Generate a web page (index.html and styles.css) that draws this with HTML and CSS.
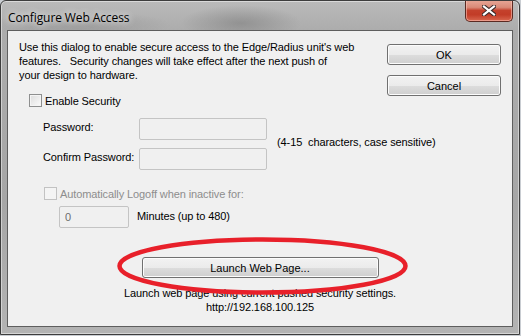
FILE: index.html
```html
<!doctype html>
<html>

<head>
  <meta charset="utf-8">
  <title>Configure Web Access</title>
  <link rel="stylesheet" href="styles.css">
</head>

<body>
  <div class="window">
    <div class="titlebar">
      <span class="title">Configure Web Access</span>
      <button class="close" title="Close">
        <svg width="14" height="11" viewBox="0 0 14 11">
          <path d="M2 1.5 L12 9.5 M12 1.5 L2 9.5" stroke="#3a2a2a" stroke-width="4.2" stroke-linecap="square" />
          <path d="M2 1.5 L12 9.5 M12 1.5 L2 9.5" stroke="#fff" stroke-width="2.2" stroke-linecap="square" />
        </svg>
      </button>
    </div>
    <div class="client">
      <div class="top">
        <div class="main">
          <p class="intro">Use this dialog to enable secure access to the Edge/Radius unit's web<br>features.&nbsp;&nbsp; Security changes will take effect after the next push of<br>your design to hardware.</p>
          <label class="check enable"><input type="checkbox">Enable Security</label>
          <div class="fields">
            <label class="lbl">Password:</label>
            <input type="text" class="field wide" disabled>
            <span class="hint">(4-15&nbsp; characters, case sensitive)</span>
            <label class="lbl">Confirm Password:</label>
            <input type="text" class="field wide" disabled>
          </div>
          <label class="check logoff disabled"><input type="checkbox" disabled>Automatically Logoff when inactive for:</label>
          <div class="minutes">
            <input type="text" class="field short" value="0" disabled>
            <span>Minutes (up to 480)</span>
          </div>
        </div>
        <div class="side">
          <button class="btn side-btn">OK</button>
          <button class="btn side-btn">Cancel</button>
        </div>
      </div>
      <div class="launch">
        <button class="btn launch-btn">Launch Web Page...</button>
        <p class="note">Launch web page using current pushed security settings.<br>http://192.168.100.125</p>
      </div>
      <!-- red marker drawn over the screenshot -->
      <svg class="mark" width="293" height="58" viewBox="0 0 293 58">
        <ellipse cx="146.5" cy="29" rx="143" ry="26.5" fill="none" stroke="#e8202a" stroke-width="4.5" />
      </svg>
    </div>
  </div>
</body>

</html>
```

FILE: styles.css
```css
html,
body {
  margin: 0;
  background: #c9cdd2;
}

/* Window frame */
.window {
  width: 520px;
  height: 335px;
  box-sizing: border-box;
  border: 1px solid #3d3d3d;
  border-radius: 6px 6px 0 0;
  background:
    radial-gradient(ellipse 60px 18px at 240px 22px, rgba(110, 110, 110, 0.45), rgba(110, 110, 110, 0)),
    radial-gradient(ellipse 90px 14px at 80px 24px, rgba(120, 120, 120, 0.35), rgba(120, 120, 120, 0)),
    linear-gradient(to bottom, #bababa 0, #acacac 30px, #a6a6a6 200px, #b3b3b3 100%);
  box-shadow: inset 0 0 0 1px rgba(255, 255, 255, 0.45);
  display: flex;
  flex-direction: column;
  overflow: hidden;
}

.titlebar {
  height: 29px;
  display: flex;
  align-items: flex-start;
  padding-left: 7px;
}

.title {
  font: 12px "Open Sans", "Noto Sans", sans-serif;
  color: #000;
  margin-top: 8px;
  text-shadow: 0 0 6px rgba(255, 255, 255, 0.9), 0 0 10px rgba(255, 255, 255, 0.6);
  letter-spacing: -0.1px;
}

.close {
  margin-left: auto;
  margin-right: 6px;
  margin-top: -1px;
  width: 48px;
  height: 22px;
  padding: 0;
  border: 1px solid #5b2a22;
  border-top: none;
  border-radius: 0 0 5px 5px;
  background: linear-gradient(to bottom, #e8a898 0, #d98a78 35%, #c4412c 50%, #c23c27 70%, #d8674f 100%);
  box-shadow: inset 0 0 0 1px rgba(255, 200, 190, 0.55);
  display: flex;
  align-items: center;
  justify-content: center;
}

/* Dialog client area */
.client {
  position: relative;
  flex: 1;
  margin: 0 6px 7px 6px;
  border: 1px solid #5e5e5e;
  background: #f0f0f0;
  font: 11px "Liberation Sans", Arial, sans-serif;
  letter-spacing: -0.1px;
  color: #000;
}

.top {
  display: flex;
  align-items: flex-start;
}

.main {
  flex: 1;
  min-width: 0;
  padding: 9px 0 0 11px;
}

.intro {
  margin: 0;
  line-height: 14px;
  white-space: nowrap;
}

.check {
  display: flex;
  align-items: center;
  height: 17px;
}

.check input {
  appearance: none;
  -webkit-appearance: none;
  width: 13px;
  height: 13px;
  margin: 0 3px 0 0;
  border: 1px solid #8e8f8f;
  background: linear-gradient(135deg, #dcdcdc, #fbfbfb);
  box-shadow: inset 0 0 0 1px #f4f4f4;
  box-sizing: border-box;
}

.enable {
  margin: 10px 0 0 10px;
}

.logoff {
  margin: 15px 0 0 25px;
}

.disabled {
  color: #8d8d8d;
}

.check.disabled input {
  border-color: #c2c2c2;
  background: #f4f4f4;
  box-shadow: none;
}

.fields {
  display: grid;
  grid-template-columns: 96px 128px auto;
  grid-template-rows: 22px 22px;
  row-gap: 8px;
  margin: 9px 0 0 24px;
}

.lbl {
  padding-top: 2px;
  line-height: 14px;
}

.hint {
  grid-column: 3;
  grid-row: 1 / span 2;
  align-self: center;
  padding: 0 0 4px 10px;
  white-space: nowrap;
}

.field {
  box-sizing: border-box;
  height: 22px;
  margin: 0;
  border: 1px solid #c4c4c4;
  border-radius: 2px;
  background: #f0f0f0;
  font: 11px "Liberation Sans", Arial, sans-serif;
  color: #6d6d6d;
  padding: 0 5px;
}

.wide {
  width: 128px;
}

.minutes {
  display: flex;
  align-items: center;
  margin: 4px 0 0 40px;
}

.short {
  width: 70px;
}

.minutes span {
  margin: 0 0 3px 8px;
}

/* Buttons */
.btn {
  box-sizing: border-box;
  height: 21px;
  padding: 0;
  border: 1px solid #707070;
  border-radius: 3px;
  background: linear-gradient(to bottom, #f2f2f2 0, #ebebeb 50%, #dddddd 51%, #cfcfcf 100%);
  box-shadow: inset 0 0 0 1px #fcfcfc;
  font: 11px "Liberation Sans", Arial, sans-serif;
  color: #000;
}

.side {
  flex: none;
  margin-right: 11px;
  padding-top: 13px;
  display: flex;
  flex-direction: column;
  gap: 10px;
}

.side-btn {
  width: 114px;
}

.launch {
  display: flex;
  flex-direction: column;
  align-items: center;
  margin-top: 29px;
}

.launch-btn {
  width: 237px;
}

.note {
  margin: 8px 0 0 0;
  line-height: 14px;
  text-align: center;
}

.mark {
  position: absolute;
  left: 108px;
  top: 206px;
}
```
